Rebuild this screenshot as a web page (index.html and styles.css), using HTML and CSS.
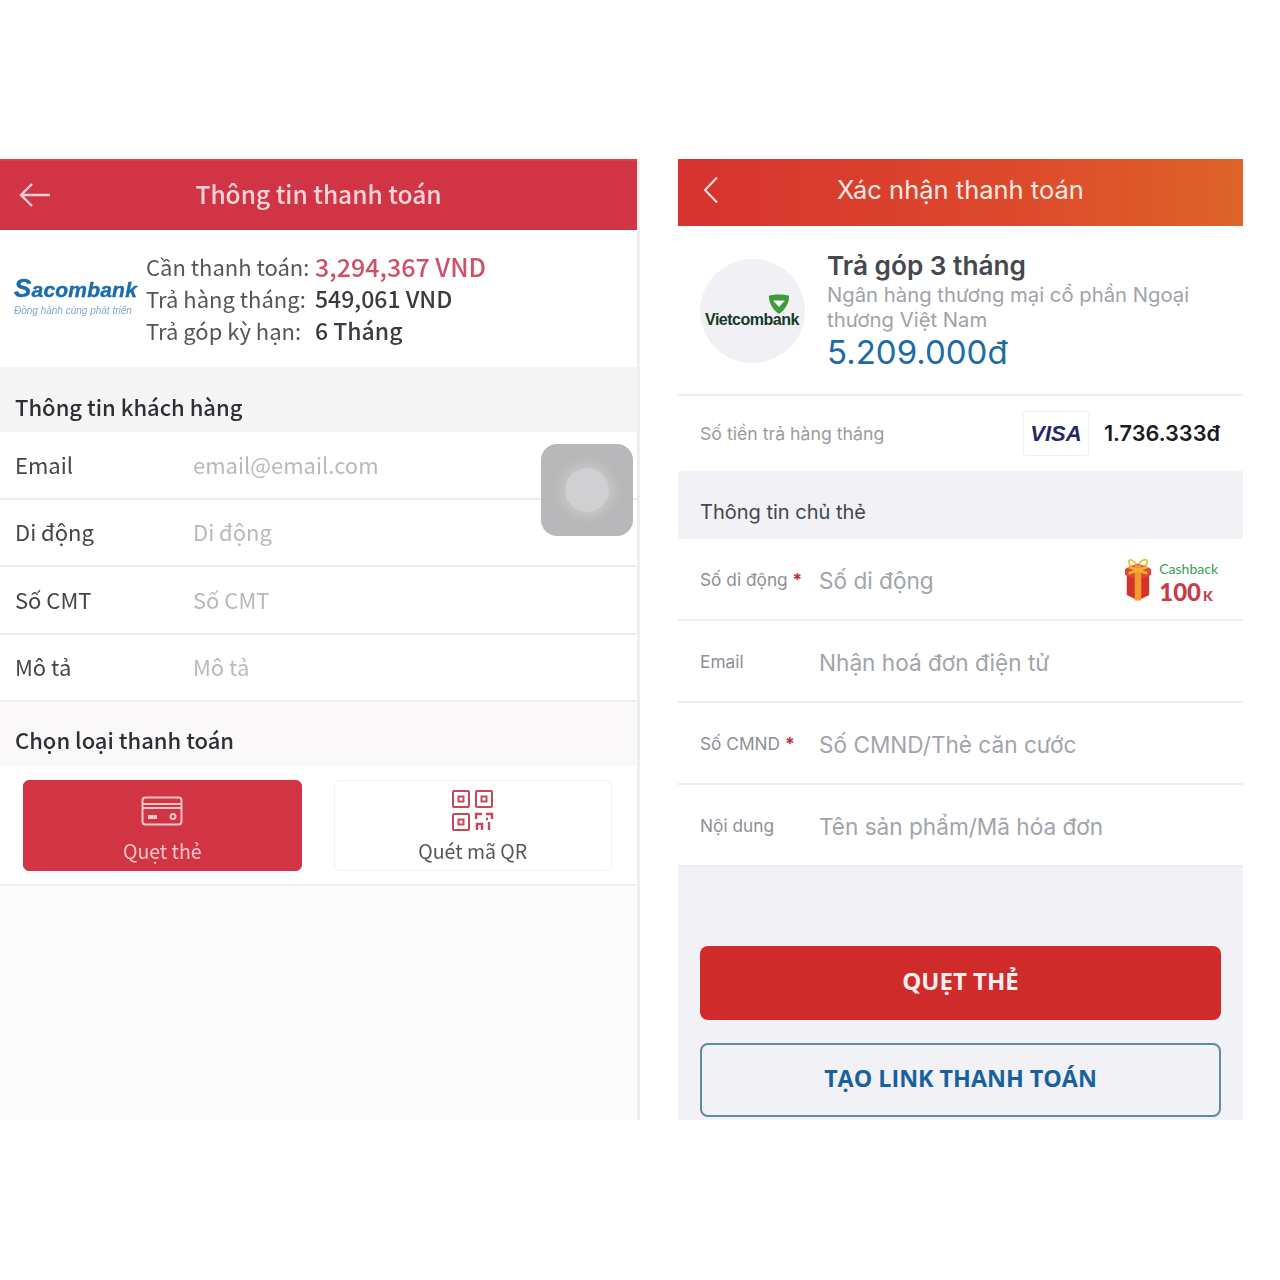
FILE: index.html
```html
<!DOCTYPE html>
<html lang="vi">
<head>
  <meta charset="UTF-8">
  <title>Thanh toán</title>
  <link rel="stylesheet" href="styles.css">
</head>
<body>
<div class="page">
  <!-- man hinh ben trai -->
  <section class="left">
    <header class="l-head">
      <svg class="l-back" width="32" height="26" viewBox="0 0 32 26"><path d="M31 13H2M13 2L2 13l11 11" fill="none" stroke="#f8cfd4" stroke-width="2.4"/></svg>
      <span>Thông tin thanh toán</span>
    </header>
    <div class="l-info">
      <div class="saco">
        <div class="saco-name"><b>S</b>acombank</div>
        <div class="saco-sub">Đồng hành cùng phát triển</div>
      </div>
      <div class="l-lines">
        <div class="l-line"><span class="l-key">Cần thanh toán:</span><span class="l-val pink">3,294,367 VND</span></div>
        <div class="l-line"><span class="l-key">Trả hàng tháng:</span><span class="l-val">549,061 VND</span></div>
        <div class="l-line"><span class="l-key">Trả góp kỳ hạn:</span><span class="l-val">6 Tháng</span></div>
      </div>
    </div>
    <h2 class="l-title first">Thông tin khách hàng</h2>
    <div class="l-row"><span class="l-label">Email</span><span class="l-ph">email@email.com</span></div>
    <div class="l-row"><span class="l-label">Di động</span><span class="l-ph">Di động</span></div>
    <div class="l-row"><span class="l-label">Số CMT</span><span class="l-ph">Số CMT</span></div>
    <div class="l-row"><span class="l-label">Mô tả</span><span class="l-ph">Mô tả</span></div>
    <h2 class="l-title second">Chọn loại thanh toán</h2>
    <div class="l-pay">
      <div class="pay-btn active">
        <svg width="42" height="30" viewBox="0 0 42 30" fill="none" stroke="#f8c6cb" stroke-width="2"><rect x="1.5" y="1.5" width="39" height="27" rx="3"/><path d="M2 8h38M2 12h38"/><rect x="7" y="19" width="9" height="4" fill="#f8c6cb" stroke="none"/><circle cx="32" cy="20.500" r="2.500"/></svg>
        <span>Quẹt thẻ</span>
      </div>
      <div class="pay-btn">
        <svg width="42" height="42" viewBox="0 0 42 42" fill="none" stroke="#c9465a" stroke-width="2"><rect x="1" y="1" width="16" height="16" rx="1"/><rect x="6.500" y="6.500" width="5" height="5"/><rect x="24" y="1" width="16" height="16" rx="1"/><rect x="29.500" y="6.500" width="5" height="5"/><rect x="1" y="24" width="16" height="16" rx="1"/><rect x="6.500" y="29.500" width="5" height="5"/><path d="M24 29v-5h6M34 24h6v5M25 40v-6h5v6M37 32v8M34 29h2" stroke-width="2.400"/></svg>
        <span>Quét mã QR</span>
      </div>
    </div>
    <div class="assist"><i></i></div>
  </section>

  <!-- man hinh ben phai -->
  <section class="right">
    <header class="r-head">
      <svg class="r-back" width="16" height="28" viewBox="0 0 16 28"><path d="M14 1.500L2 14l12 12.500" fill="none" stroke="#fbe3dc" stroke-width="2"/></svg>
      <span>Xác nhận thanh toán</span>
    </header>
    <div class="r-info">
      <div class="vcb">
        <svg class="vcb-mark" width="22" height="21" viewBox="0 0 22 21"><path d="M1 1.500C7 0 15 0 21 1.500 21.500 9 17 16 11 20 5 16 .5 9 1 1.500z" fill="#3f9a3a"/><path d="M5 6.500h12L11 13z" fill="#f4f4f6"/></svg>
        <span class="vcb-name">Vietcombank</span>
      </div>
      <div class="r-text">
        <h1>Trả góp 3 tháng</h1>
        <p>Ngân hàng thương mại cổ phần Ngoại thương Việt Nam</p>
        <div class="r-price">5.209.000đ</div>
      </div>
    </div>
    <div class="r-month">
      <span class="r-month-label">Số tiền trả hàng tháng</span>
      <span class="visa">VISA</span>
      <span class="r-month-val">1.736.333đ</span>
    </div>
    <h2 class="r-title">Thông tin chủ thẻ</h2>
    <div class="r-row">
      <span class="r-label">Số di động <em>*</em></span><span class="r-ph">Số di động</span>
      <div class="cash">
        <svg width="28" height="47" viewBox="0 0 30 47"><path d="M15 10C9 0 3 1 6 7c1 3 6 4 9 4 3 0 8-1 9-4 3-6-3-7-9 1z" fill="none" stroke="#e8c23c" stroke-width="2"/><path d="M3 14l12-3 12 3v26l-12 6-12-6z" fill="#d5322c"/><path d="M1 13c0-2 13-6 14-6s14 4 14 6v5c0 2-13 5-14 5S1 20 1 18z" fill="#e0443a"/><path d="M11.500 8h7v38h-7z" fill="#f39a2c"/><path d="M5 10l20 7M25 10L5 17" stroke="#f3b02f" stroke-width="3"/></svg>
        <div class="cash-text"><span class="cash-top">Cashback</span><span class="cash-num">100<small>K</small></span></div>
      </div>
    </div>
    <div class="r-row"><span class="r-label">Email</span><span class="r-ph">Nhận hoá đơn điện tử</span></div>
    <div class="r-row"><span class="r-label">Số CMND <em>*</em></span><span class="r-ph">Số CMND/Thẻ căn cước</span></div>
    <div class="r-row"><span class="r-label">Nội dung</span><span class="r-ph">Tên sản phẩm/Mã hóa đơn</span></div>
    <div class="r-actions">
      <button class="btn-red">QUẸT THẺ</button>
      <button class="btn-line">TẠO LINK THANH TOÁN</button>
    </div>
  </section>
</div>
</body>
</html>
```

FILE: styles.css
```css
*{
  margin: 0;
  padding: 0;
  box-sizing: border-box;
}
body{
  background: #fff;
  height: 1280px;
  overflow: hidden;
}
.page{
  display: flex;
  padding-top: 159px;
  height: 1120px;
}

/* ben trai */
.left{
  width: 640px;
  height: 961px;
  margin-right: 38px;
  position: relative;
  background: #fdfcfd;
  font-family: "Noto Sans CJK SC", "Noto Sans", sans-serif;
  border-right: 3px solid #eeeeef;
  filter: blur(.6px);
}
.l-head{
  height: 71px;
  background: #d13545;
  border-top: 2px solid #e83b3f;
  display: flex;
  align-items: center;
  justify-content: center;
  color: #f8d5d8;
  font-size: 24.500px;
  font-weight: 500;
  padding-bottom: 4px;
  position: relative;
}
.l-back{
  position: absolute;
  left: 19px;
  top: 21px;
}
.l-info{
  height: 137px;
  background: #fff;
  display: flex;
  align-items: center;
  padding-left: 14px;
}
.saco{
  width: 132px;
  flex: none;
  margin-top: -3px;
}
.saco-name{
  font: italic 700 21px "Liberation Sans", sans-serif;
  color: #1a6cb0;
  letter-spacing: .2px;
  line-height: 20px;
  white-space: nowrap;
  -webkit-text-stroke: .4px #1a6cb0;
}
.saco-name b{
  font-size: 26px;
}
.saco-sub{
  font: italic 10px "Liberation Sans", sans-serif;
  color: #7ea8d4;
  white-space: nowrap;
  margin-top: 5px;
}
.l-lines{
  font-size: 22px;
  color: #55565c;
  margin-top: -2px;
}
.l-line{
  display: flex;
  height: 32px;
  line-height: 32px;
  white-space: nowrap;
}
.l-key{
  width: 169px;
}
.l-val{
  color: #3a3b40;
  font-weight: 500;
  font-size: 23px;
}
.l-val.pink{
  color: #cf5068;
  font-size: 25px;
}
.l-title{
  font-size: 22px;
  font-weight: 500;
  color: #2e2f34;
  padding-left: 15px;
  background: #f5f5f6;
  display: flex;
  align-items: flex-end;
  padding-bottom: 10px;
}
.l-title.first{
  height: 65px;
}
.l-title.second{
  height: 64px;
  background: #fbf8fa;
  align-items: center;
  padding-bottom: 0;
  padding-top: 10px;
}
.l-row{
  height: 67.500px;
  background: #fff;
  border-bottom: 2px solid #eeeef0;
  display: flex;
  align-items: center;
  font-size: 22px;
  padding: 0 0 2px 15px;
}
.l-label{
  width: 178px;
  color: #45464b;
}
.l-ph{
  color: #b9b9be;
}
.l-pay{
  height: 120px;
  background: #fff;
  border-bottom: 2px solid #f1f0f2;
  display: flex;
  padding: 14px 25px 0 23px;
  gap: 32px;
}
.pay-btn{
  width: 279px;
  height: 91px;
  border-radius: 6px;
  background: #fff;
  border: 1px solid #f2f2f4;
  display: flex;
  flex-direction: column;
  align-items: center;
  justify-content: flex-end;
  font-size: 19.500px;
  line-height: 30px;
  color: #55565c;
  padding-bottom: 4px;
}
.pay-btn svg{
  margin-bottom: 4px;
}
.pay-btn.active{
  background: #d13443;
  border-color: #d13443;
  color: #f8c6cb;
}
.pay-btn.active svg{
  margin-bottom: 10px;
}
.assist{
  position: absolute;
  left: 541px;
  top: 285px;
  width: 92px;
  height: 92px;
  border-radius: 16px;
  background: #b8b8ba;
  display: flex;
  align-items: center;
  justify-content: center;
}
.assist i{
  width: 44px;
  height: 44px;
  border-radius: 50%;
  background: #d0d0d2;
  box-shadow: 0 0 10px 5px #c6c6c8;
}

/* ben phai */
.right{
  width: 565px;
  height: 961px;
  background: #f2f2f6;
  font-family: Inter, Roboto, sans-serif;
}
.r-head{
  height: 67px;
  background: linear-gradient(90deg, #d7322f, #dc4a2c 60%, #de6428);
  color: #fbe9e3;
  font-size: 25.500px;
  display: flex;
  align-items: center;
  justify-content: center;
  padding-bottom: 6px;
  position: relative;
}
.r-back{
  position: absolute;
  left: 25px;
  top: 17px;
}
.r-info{
  height: 170px;
  background: #fff;
  border-bottom: 2px solid #eeeef1;
  display: flex;
  padding: 33px 0 0 22px;
}
.vcb{
  width: 105px;
  height: 104px;
  border-radius: 50%;
  background: #f1f1f5;
  flex: none;
  position: relative;
  margin-right: 22px;
}
.vcb-mark{
  position: absolute;
  left: 68px;
  top: 35px;
}
.vcb-name{
  position: absolute;
  left: 5px;
  top: 51px;
  font: 700 16px/20px "Liberation Sans", sans-serif;
  color: #16392c;
  letter-spacing: -.5px;
}
.r-text{
  margin-top: -9px;
}
.r-text h1{
  font-size: 26.200px;
  line-height: 32px;
  font-weight: 600;
  color: #46484f;
}
.r-text p{
  font-size: 20.300px;
  line-height: 25px;
  color: #a0a2a9;
  width: 375px;
}
.r-price{
  font-size: 33px;
  line-height: 40px;
  color: #1d6ba5;
}
.r-month{
  height: 75px;
  background: #fff;
  display: flex;
  align-items: center;
  padding: 0 23px 0 22px;
}
.r-month-label{
  font-size: 17.700px;
  color: #9a9ca3;
  flex: 1;
}
.visa{
  width: 66px;
  height: 45px;
  border: 1px solid #f0f0f3;
  border-radius: 3px;
  font: italic 700 22px/43px "Liberation Sans", sans-serif;
  color: #252767;
  text-align: center;
  margin-right: 15px;
}
.r-month-val{
  font-size: 21.700px;
  font-weight: 600;
  color: #1c1c20;
  margin-top: -2px;
}
.r-title{
  height: 68px;
  font-size: 20px;
  font-weight: 400;
  color: #44464c;
  padding: 29px 0 0 22px;
}
.r-row{
  height: 82px;
  background: #fff;
  border-bottom: 2px solid #eeeef1;
  display: flex;
  align-items: center;
  padding-left: 22px;
  position: relative;
}
.r-label{
  width: 119px;
  font-size: 17.300px;
  color: #8d8f96;
}
.r-label em{
  color: #c22c3c;
  font-style: normal;
  font-weight: 700;
}
.r-ph{
  font-size: 22.600px;
  color: #a2a4ab;
  padding-top: 2px;
}
.cash{
  position: absolute;
  right: 25px;
  top: 17px;
  display: flex;
  gap: 7px;
}
.cash-text{
  display: flex;
  flex-direction: column;
  font-family: Lato, sans-serif;
  padding-top: 4px;
}
.cash-top{
  font-size: 14px;
  line-height: 17px;
  color: #3f9c50;
}
.cash-num{
  font-size: 24px;
  line-height: 29px;
  font-weight: 900;
  color: #c73c4a;
}
.cash-num small{
  font-size: 14px;
  margin-left: 2px;
}
.r-actions{
  padding: 79px 22px 0;
  display: flex;
  flex-direction: column;
  gap: 23px;
}
.r-actions button{
  height: 74px;
  border-radius: 8px;
  font-family: "Open Sans", sans-serif;
  font-size: 24px;
  font-weight: 700;
  padding-bottom: 5px;
}
.btn-red{
  background: #cf2b2a;
  border: 0;
  color: #fbeeee;
}
.btn-line{
  background: transparent;
  border: 2px solid #5c8aa8;
  color: #17619f;
}
.r-actions .btn-line{
  font-size: 23.300px;
}
```
